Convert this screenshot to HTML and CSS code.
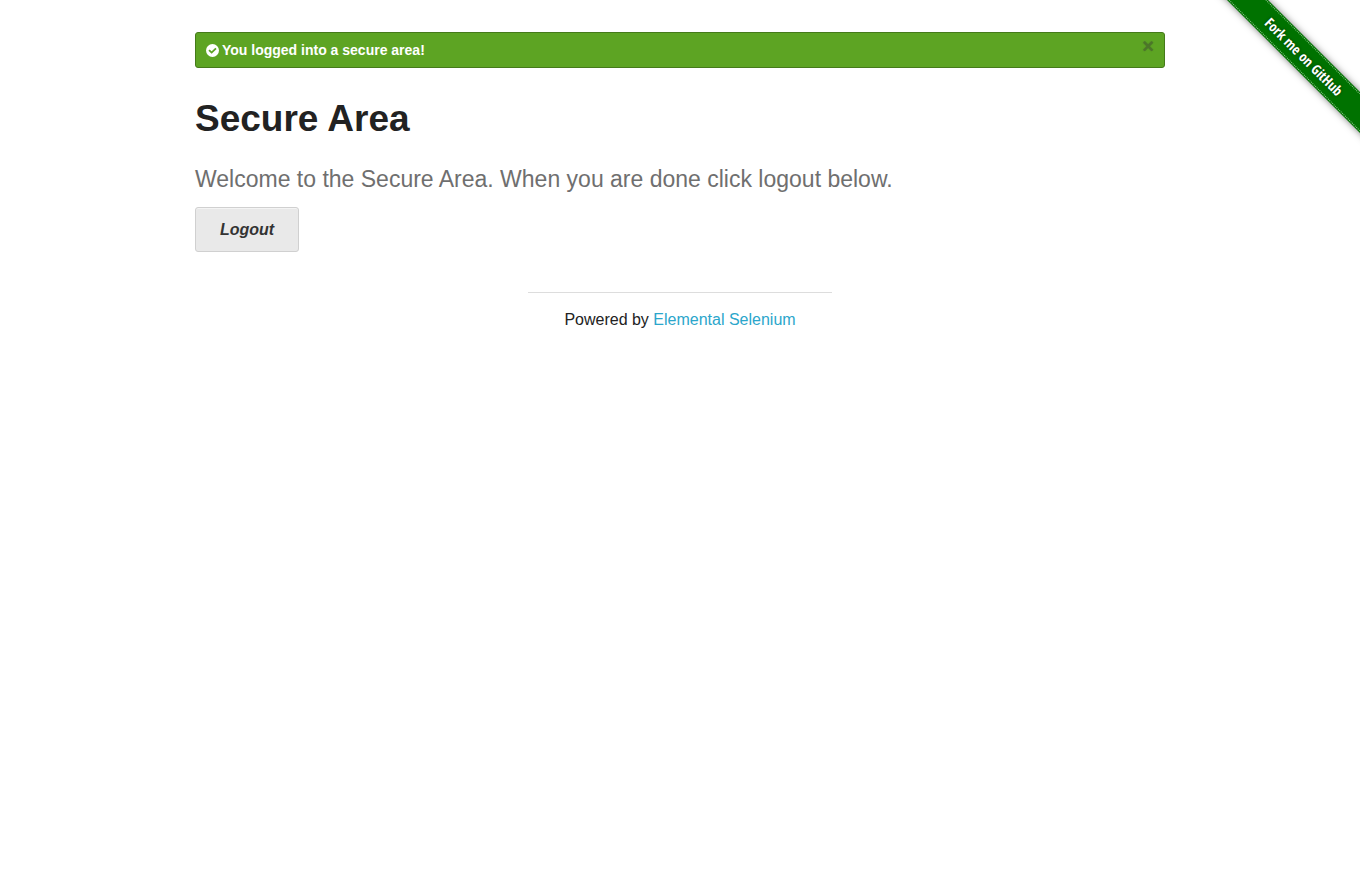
FILE: index.html
```
<!DOCTYPE html>
<html lang="en">
<head>
<meta charset="utf-8">
<title>The Internet</title>
<link rel="stylesheet" href="styles.css">
</head>
<body>
<a class="ribbon" href="#fork"><span class="ribbon-band">Fork me on GitHub</span></a>
<div class="row">
  <div class="alert" role="status">
    <svg class="alert-icon" viewBox="0 0 12 12" aria-hidden="true"><circle cx="6" cy="6" r="6" fill="#fff"/><path d="M2.8 5.7 L5.2 7.9 L9.2 4" fill="none" stroke="#5da423" stroke-width="1.7"/></svg>
    <span>You logged into a secure area!</span>
    <button class="alert-close" type="button" aria-label="Close">×</button>
  </div>
  <main>
    <h1 class="title">Secure Area</h1>
    <p class="subheader">Welcome to the Secure Area. When you are done click logout below.</p>
    <a class="button" href="#logout">Logout</a>
  </main>
</div>
<footer class="footer">Powered by <a class="footer-link" href="#elemental">Elemental Selenium</a></footer>
</body>
</html>
```
FILE: styles.css
```
*, *::before, *::after { box-sizing: border-box; }

body {
  margin: 0;
  background: #fff;
  color: #222;
  font-family: "Liberation Sans", Arial, sans-serif;
  font-size: 16px;
  line-height: 24px;
}

.row {
  max-width: 1000px;
  margin: 0 auto;
  padding: 32px 15px 0;
}

.alert {
  display: flex;
  align-items: center;
  gap: 3px;
  padding: 9px 10px;
  border: 1px solid #457a1a;
  border-radius: 3px;
  background: #5da423;
  color: #fff;
  font-size: 14px;
  font-weight: bold;
  line-height: 16px;
}

.alert-icon { width: 13px; height: 13px; }

.alert-close {
  align-self: flex-start;
  margin: -5px 0 -5px auto;
  padding: 0;
  border: 0;
  background: none;
  color: #333;
  font: bold 20px/18px "Liberation Sans", Arial, sans-serif;
  text-shadow: 0 0 1px #333;
  opacity: 0.4;
  cursor: pointer;
}

.title {
  margin: 25px 0 18px;
  font-size: 37px;
  line-height: 52px;
}

.subheader {
  margin: 0 0 12px;
  color: #6f6f6f;
  font-size: 23px;
  line-height: 32px;
}

.button {
  display: inline-block;
  padding: 14px 24px 13px;
  border: 1px solid #d0d0d0;
  border-radius: 3px;
  background: #e9e9e9;
  box-shadow: inset 0 1px 0 rgba(255, 255, 255, 0.5);
  color: #333;
  font-style: italic;
  font-weight: bold;
  line-height: 16px;
  text-decoration: none;
  vertical-align: top;
}

.footer {
  width: 304px;
  max-width: 100%;
  margin: 40px auto 0;
  padding-top: 15px;
  border-top: 1px solid #ddd;
  text-align: center;
}

.footer-link { color: #2ba6cb; text-decoration: none; }

.ribbon {
  position: absolute;
  top: 0;
  right: 0;
  width: 149px;
  height: 149px;
  overflow: hidden;
  color: #fff;
  font: bold 14px/29px "Open Sans Condensed", "Noto Sans Condensed", "Liberation Sans Narrow", Lato, sans-serif;
  text-align: center;
  text-decoration: none;
  pointer-events: none;
}

.ribbon-band {
  position: absolute;
  top: 42px;
  right: -54px;
  width: 220px;
  background: #007200;
  box-shadow: 0 0 7px rgba(0, 0, 0, 0.5);
  text-shadow: 0 0 3px rgba(0, 0, 0, 0.5);
  transform: rotate(45deg);
  pointer-events: auto;
}

.ribbon-band::before {
  content: "";
  position: absolute;
  inset: 1px 0;
  border: 1px dotted #8cc68c;
  border-width: 1px 0;
}
```
